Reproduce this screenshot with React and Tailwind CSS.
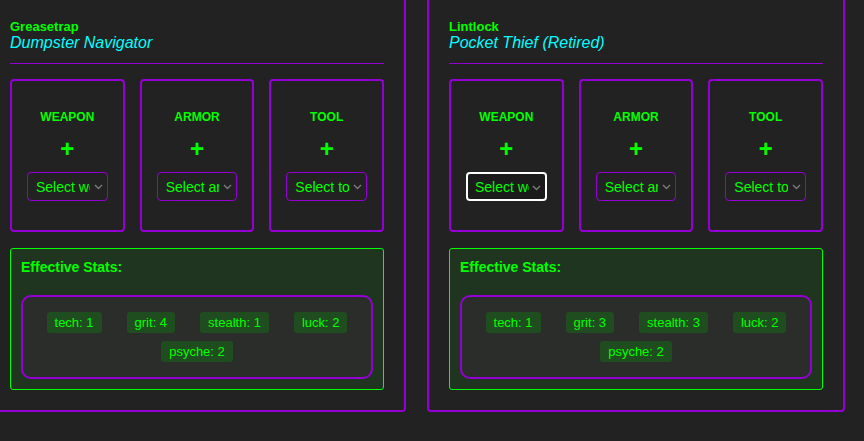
import React from "react";

const characters = [
  {
    name: "Greasetrap",
    title: "Dumpster Navigator",
    stats: { tech: 1, grit: 4, stealth: 1, luck: 2, psyche: 2 },
    focused: null,
  },
  {
    name: "Lintlock",
    title: "Pocket Thief (Retired)",
    stats: { tech: 1, grit: 3, stealth: 3, luck: 2, psyche: 2 },
    focused: "weapon",
  },
];

const slots = ["weapon", "armor", "tool"];

function Chevron() {
  return (
    <svg
      width="9"
      height="6"
      viewBox="0 0 9 6"
      className="pointer-events-none absolute right-[4px] top-[11px]"
    >
      <path d="M1 1l3.5 3.5L8 1" fill="none" stroke="#7a7a7a" strokeWidth="1.4" />
    </svg>
  );
}

// looks like a native select, but the label is clipped before the arrow
function SlotSelect({ slot, focused }) {
  return (
    <div
      className={
        focused
          ? "relative w-full h-[29px] rounded-[4px] border-2 border-white bg-[#1b1b1b] pl-[7px] pr-[16px] flex items-center"
          : "relative w-full h-[29px] rounded-[4px] border border-[#9400d3] pl-2 pr-[17px] flex items-center"
      }
    >
      <span className="block min-w-0 flex-1 overflow-hidden whitespace-nowrap text-[14px] leading-[16px] text-[#00ff00]">
        Select {slot}
      </span>
      <Chevron />
    </div>
  );
}

function SlotBox({ slot, focused }) {
  return (
    <div className="h-[153px] border-2 border-[#9400d3] rounded-[4px] p-[15px] flex flex-col items-center justify-center">
      <div className="text-[12px] leading-[14px] font-bold uppercase text-[#00ff00]">
        {slot}
      </div>
      <div className="text-[24px] leading-[24px] font-bold text-[#00ff00] mt-[13px] mb-[11px]">
        +
      </div>
      <SlotSelect slot={slot} focused={focused} />
    </div>
  );
}

function CharacterCard({ character }) {
  return (
    <div className="w-[418px] shrink-0 border-2 border-[#9400d3] rounded-[4px] p-5">
      <div className="pb-[11px] border-b border-[#9400d3] mb-[15px]">
        <div className="text-[13px] leading-[15px] font-bold text-[#00ff00]">
          {character.name}
        </div>
        <div className="text-[16px] leading-[18px] italic text-[#00ffff]">
          {character.title}
        </div>
      </div>

      <div className="grid grid-cols-3 gap-[15px]">
        {slots.map((slot) => (
          <SlotBox key={slot} slot={slot} focused={character.focused === slot} />
        ))}
      </div>

      <div className="mt-4 border border-[#00ff00] rounded-[3px] bg-[#203520] p-[10px]">
        <h4 className="text-[14px] leading-[16px] font-bold text-[#00ff00] mb-5">
          Effective Stats:
        </h4>
        <div className="border-2 border-[#9400d3] rounded-[10px] bg-[#2a2d2a] p-[15px] flex flex-wrap justify-center gap-x-[25px] gap-y-[8px]">
          {Object.entries(character.stats).map(([key, value]) => (
            <span
              key={key}
              className="text-[13px] leading-[15px] px-2 py-[3px] rounded-[3px] bg-[#1f4d1f] text-[#00ff00]"
            >
              {key}: {value}
            </span>
          ))}
        </div>
      </div>
    </div>
  );
}

export default function App() {
  return (
    <div
      className="min-h-screen bg-[#222222] overflow-hidden"
      style={{ fontFamily: '"Liberation Sans", Arial, sans-serif' }}
    >
      <div className="flex gap-[21px] -ml-[12px] -mt-[3px]">
        {characters.map((c) => (
          <CharacterCard key={c.name} character={c} />
        ))}
      </div>
    </div>
  );
}
